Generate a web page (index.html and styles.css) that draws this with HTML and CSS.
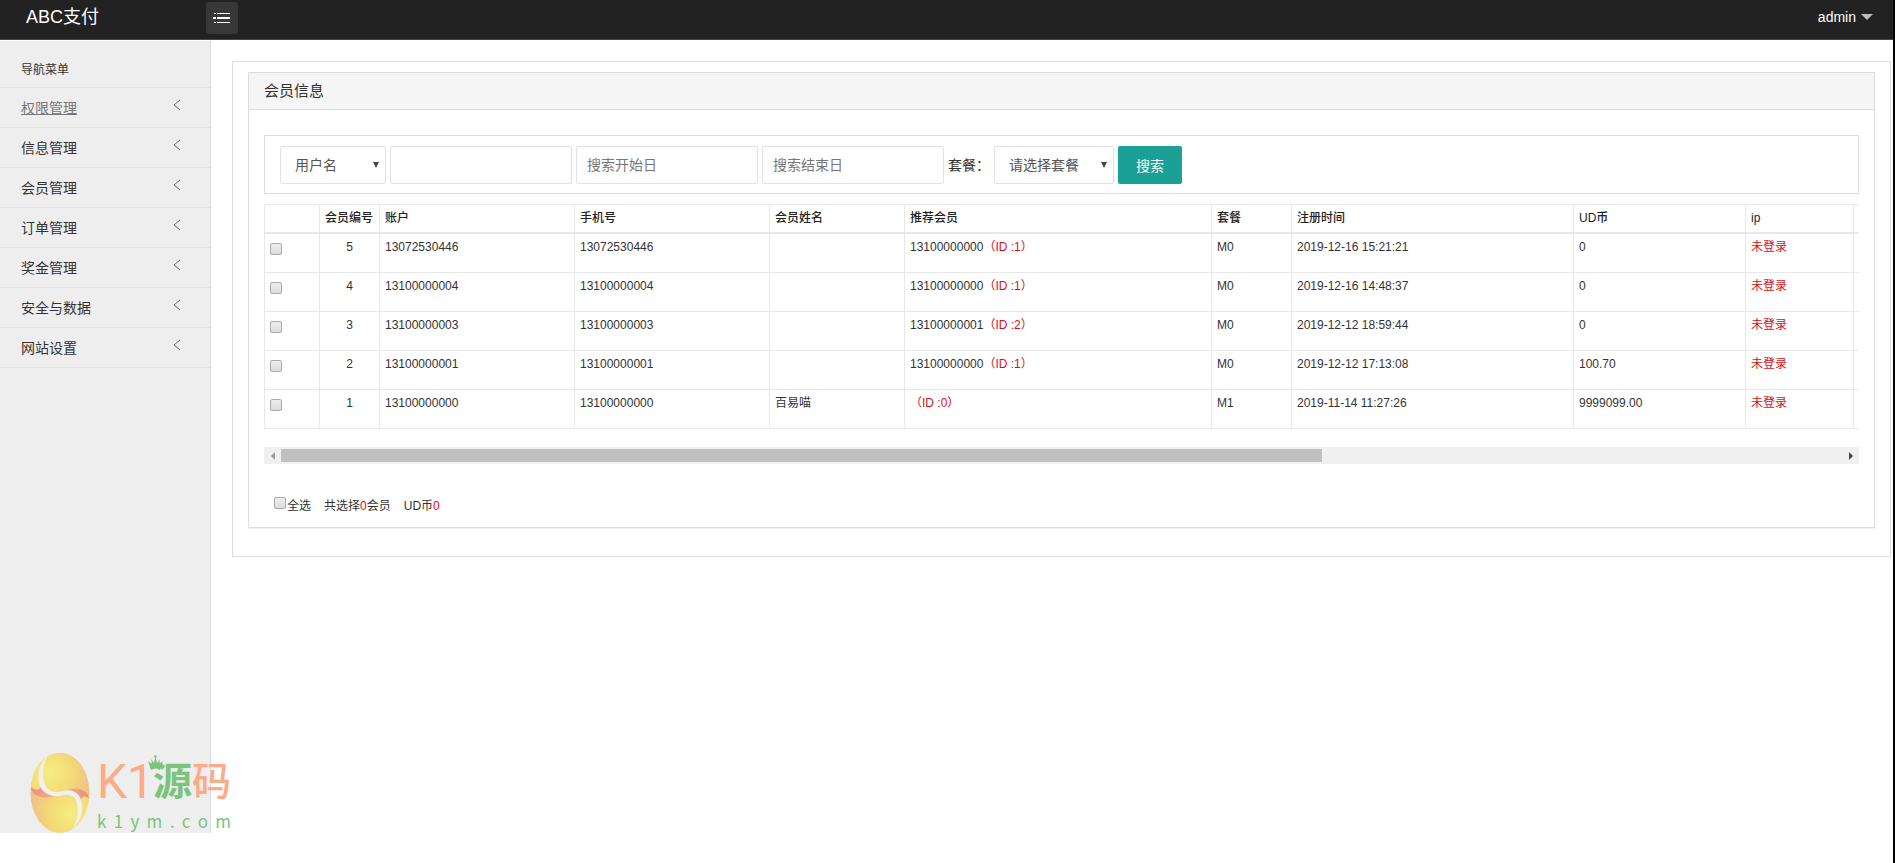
FILE: index.html
```html
<!DOCTYPE html>
<html lang="zh-CN">
<head>
<meta charset="utf-8">
<title>ABC支付</title>
<link rel="stylesheet" href="styles.css">
</head>
<body>
<header class="topbar">
  <a class="brand" href="#">ABC支付</a>
  <button class="menu-toggle" type="button" aria-label="菜单">
    <svg width="18" height="12" viewBox="0 0 18 12" stroke="#fff" stroke-width="1"><path d="M1 1.5h2M4 1.5h13M0 5.5h3M4 5.5h13M0 6.5h3M4 6.5h13M1 10.5h2M4 10.5h13"/></svg>
  </button>
  <button class="user" type="button">admin <span class="caret"></span></button>
</header>
<div class="layout">
  <nav class="sidebar">
    <h2 class="nav-title">导航菜单</h2>
    <a class="nav-item active" href="#">权限管理<svg class="chev" viewBox="0 0 8 12"><path d="M7 1L1 6l6 5"/></svg></a>
    <a class="nav-item" href="#">信息管理<svg class="chev" viewBox="0 0 8 12"><path d="M7 1L1 6l6 5"/></svg></a>
    <a class="nav-item" href="#">会员管理<svg class="chev" viewBox="0 0 8 12"><path d="M7 1L1 6l6 5"/></svg></a>
    <a class="nav-item" href="#">订单管理<svg class="chev" viewBox="0 0 8 12"><path d="M7 1L1 6l6 5"/></svg></a>
    <a class="nav-item" href="#">奖金管理<svg class="chev" viewBox="0 0 8 12"><path d="M7 1L1 6l6 5"/></svg></a>
    <a class="nav-item" href="#">安全与数据<svg class="chev" viewBox="0 0 8 12"><path d="M7 1L1 6l6 5"/></svg></a>
    <a class="nav-item" href="#">网站设置<svg class="chev" viewBox="0 0 8 12"><path d="M7 1L1 6l6 5"/></svg></a>
  </nav>
  <main class="content">
    <section class="panel">
      <h1 class="panel-head">会员信息</h1>
      <div class="panel-body">
        <form class="search">
          <span class="select-wrap field-type"><select aria-label="搜索类型"><option>用户名</option></select></span>
          <input class="text" type="text" aria-label="关键字">
          <input class="text" type="text" placeholder="搜索开始日" aria-label="搜索开始日">
          <input class="text" type="text" placeholder="搜索结束日" aria-label="搜索结束日">
          <label class="plan-label" for="plan">套餐：</label>
          <span class="select-wrap field-plan"><select id="plan"><option>请选择套餐</option></select></span>
          <button class="submit" type="button">搜索</button>
        </form>
        <div class="table-scroll">
          <table class="members">
            <colgroup><col class="c-check"><col class="c-id"><col class="c-acc"><col class="c-acc"><col class="c-name"><col class="c-ref"><col class="c-plan"><col class="c-time"><col class="c-coin"><col class="c-ip"><col></colgroup>
            <thead><tr><th></th><th>会员编号</th><th>账户</th><th>手机号</th><th>会员姓名</th><th>推荐会员</th><th>套餐</th><th>注册时间</th><th>UD币</th><th>ip</th><th></th></tr></thead>
            <tbody>
              <tr><td><input type="checkbox" aria-label="选择5"></td><td class="num">5</td><td>13072530446</td><td>13072530446</td><td></td><td>13100000000<span class="red">（ID :1）</span></td><td>M0</td><td>2019-12-16 15:21:21</td><td>0</td><td class="red">未登录</td><td></td></tr>
              <tr><td><input type="checkbox" aria-label="选择4"></td><td class="num">4</td><td>13100000004</td><td>13100000004</td><td></td><td>13100000000<span class="red">（ID :1）</span></td><td>M0</td><td>2019-12-16 14:48:37</td><td>0</td><td class="red">未登录</td><td></td></tr>
              <tr><td><input type="checkbox" aria-label="选择3"></td><td class="num">3</td><td>13100000003</td><td>13100000003</td><td></td><td>13100000001<span class="red">（ID :2）</span></td><td>M0</td><td>2019-12-12 18:59:44</td><td>0</td><td class="red">未登录</td><td></td></tr>
              <tr><td><input type="checkbox" aria-label="选择2"></td><td class="num">2</td><td>13100000001</td><td>13100000001</td><td></td><td>13100000000<span class="red">（ID :1）</span></td><td>M0</td><td>2019-12-12 17:13:08</td><td>100.70</td><td class="red">未登录</td><td></td></tr>
              <tr><td><input type="checkbox" aria-label="选择1"></td><td class="num">1</td><td>13100000000</td><td>13100000000</td><td>百易喵</td><td><span class="red">（ID :0）</span></td><td>M1</td><td>2019-11-14 11:27:26</td><td>9999099.00</td><td class="red">未登录</td><td></td></tr>
            </tbody>
          </table>
        </div>
        <div class="hbar">
          <span class="arrow left"></span>
          <div class="track"><div class="thumb"></div></div>
          <span class="arrow right"></span>
        </div>
        <div class="summary">
          <label class="all"><input type="checkbox">全选</label>
          <span>共选择<span class="hot">0</span>会员</span>
          <span>UD币<span class="hot">0</span></span>
        </div>
      </div>
    </section>
  </main>
</div>
<div class="watermark">
  <svg class="egg" viewBox="0 0 60 80">
    <defs>
      <radialGradient id="top" gradientUnits="userSpaceOnUse" cx="20" cy="20" r="42"><stop offset="0" stop-color="#f6ee80"/><stop offset=".5" stop-color="#f3dc78"/><stop offset="1" stop-color="#f0c088"/></radialGradient>
      <radialGradient id="bottom" gradientUnits="userSpaceOnUse" cx="41" cy="60" r="42"><stop offset="0" stop-color="#f6ee80"/><stop offset=".5" stop-color="#f4da74"/><stop offset="1" stop-color="#f0bf88"/></radialGradient>
      <linearGradient id="blushL" x1="1" y1="0" x2="0" y2="0"><stop offset="0" stop-color="#f0b488"/><stop offset="1" stop-color="#ea8c84"/></linearGradient>
      <linearGradient id="blushR" x1="0" y1="0" x2="1" y2="0"><stop offset="0" stop-color="#f0b488"/><stop offset="1" stop-color="#ea8c84"/></linearGradient>
    </defs>
    <ellipse cx="30" cy="40" rx="29.5" ry="40" fill="url(#bottom)"/>
    <path fill="url(#top)" d="M1 35C2 14 14 0 30 0C48 0 59 20 59 43C50 37 42 34 34 39C25 44 12 44 1 35Z"/>
    <path fill="url(#blushL)" d="M1 34C5 38 9 37 11 34C14 39 18 42 25 43C15 46 2 44 1 34Z"/>
    <path fill="url(#blushR)" d="M59 46C55 42 53 43 51 46C48 40 43 38 36 37C46 34 58 36 59 46Z"/>
    <path fill="#f0f0f0" d="M18 3C8 10 7 24 10 33C13 41 22 44 30 43C38 41 45 42 47 50C49 60 47 70 41 77C52 68 54 55 51 47C48 38 40 36 33 38C25 41 16 38 14 28C12 18 14 8 18 3Z"/>
  </svg>
  <div class="mark-text">
    <div class="mark-name"><span class="k1">K1</span><span class="yuan">源</span><span class="ma">码</span></div>
    <div class="mark-url"><span>k</span><span>1</span><span>y</span><span>m</span><span>.</span><span>c</span><span>o</span><span>m</span></div>
  </div>
  <svg class="crown" viewBox="0 0 16 16"><path fill="#7bc47b" d="M3 15L1 9 0 6l4 3-1-5 3 4 1-5-1-2 1-1 2 1-1 2 1 5 3-4-1 5 4-3-1 3-2 6Q8 12 3 15Z"/></svg>
</div>
</body>
</html>
```
FILE: styles.css
```css
* { box-sizing: border-box; }
body {
  margin: 0;
  min-height: 100vh;
  display: flex;
  flex-direction: column;
  border-right: 2px solid #000;
  background: #fff;
  color: #333;
  font: 12px/18px "Liberation Sans", "Noto Sans CJK SC", sans-serif;
}
button, input, select { font-family: inherit; }
a { color: inherit; text-decoration: none; }
.topbar {
  display: flex;
  align-items: flex-start;
  height: 40px;
  padding: 2px 20px 0 26px;
  background: #222;
  border-bottom: 1px solid #484848;
}
.brand { width: 180px; font-size: 18px; line-height: 30px; color: #fff; }
.menu-toggle {
  display: flex;
  align-items: center;
  justify-content: center;
  width: 32px;
  height: 32px;
  padding: 0;
  border: 0;
  border-radius: 4px;
  background: #383838;
}
.user {
  display: flex;
  align-items: center;
  gap: 5px;
  margin-left: auto;
  padding: 0;
  border: 0;
  background: none;
  color: #fff;
  font-size: 14px;
  line-height: 30px;
}
.caret { border: 6px solid transparent; border-top-color: #bbb; border-bottom: 0; }
.layout { flex: 1; display: flex; padding-bottom: 30px; }
.sidebar { width: 211px; flex: none; background: #eee; border-right: 1px solid #ddd; border-top: 1px solid #fff; }
.nav-title {
  margin: 0;
  padding: 20px 21px 8px;
  border-bottom: 1px solid #e2e2e2;
  font-size: 12px;
  line-height: 18px;
  font-weight: 400;
}
.nav-item {
  display: flex;
  justify-content: space-between;
  align-items: flex-start;
  height: 40px;
  padding: 10px 29px 0 21px;
  border-bottom: 1px solid #e2e2e2;
  font-size: 14px;
  line-height: 20px;
}
.active { color: #777; text-decoration: underline; }
.chev { width: 8px; height: 12px; margin-top: 1px; fill: none; stroke: #666; stroke-width: 1; }
.content { flex: 1; min-width: 0; align-self: flex-start; margin: 21px 2px 0 21px; padding: 10px 15px 28px; border: 1px solid #ddd; }
.panel { border: 1px solid #ddd; box-shadow: 0 1px 1px rgba(0, 0, 0, .05); }
.panel-head {
  margin: 0;
  padding: 8px 15px;
  background: #f5f5f5;
  border-bottom: 1px solid #ddd;
  font-size: 15px;
  line-height: 20px;
  font-weight: 400;
}
.panel-body { padding: 25px 15px 12px; }
.search {
  display: flex;
  align-items: center;
  gap: 4px;
  height: 59px;
  padding: 0 15px;
  border: 1px solid #ddd;
}
.select-wrap { position: relative; height: 38px; }
.select-wrap::after {
  content: "";
  position: absolute;
  right: 7px;
  top: 16px;
  border: 3px solid transparent;
  border-top: 6px solid #444;
  border-bottom: 0;
  pointer-events: none;
}
.field-type { width: 106px; }
.field-plan { width: 120px; }
select, .text {
  height: 38px;
  border: 1px solid #e2e2e2;
  border-radius: 2px;
  background: #fff;
  color: #555;
  font-size: 14px;
}
select { appearance: none; width: 100%; padding: 0 14px; }
.text { width: 182px; padding: 0 10px; }
.text::placeholder { color: #777; }
.plan-label { width: 42px; font-size: 14px; line-height: 20px; white-space: nowrap; }
.submit { width: 64px; height: 38px; padding: 0; border: 0; border-radius: 2px; background: #1aa094; color: #fff; font-size: 14px; }
.table-scroll { margin-top: 10px; overflow: hidden; }
.members { width: 2388px; table-layout: fixed; border-collapse: collapse; }
.members th, .members td { border: 1px solid #e8e8e8; padding: 4px 5px; vertical-align: top; text-align: left; }
.members th { height: 28px; border-bottom-width: 2px; font-weight: 500; color: #222; }
.members td { height: 39px; }
.members tbody tr:first-child td { height: 40px; }
.members .num { text-align: center; }
.c-check { width: 55px; }
.c-id { width: 60px; }
.c-acc { width: 195px; }
.c-name { width: 135px; }
.c-ref { width: 307px; }
.c-plan { width: 80px; }
.c-time { width: 282px; }
.c-coin { width: 172px; }
.c-ip { width: 108px; }
.red { color: #d4101a; }
.hot { color: #f00; }
input[type="checkbox"] {
  appearance: none;
  display: block;
  width: 12px;
  height: 12px;
  margin: 5px 0 0;
  border: 1px solid #aaa;
  border-radius: 2px;
  background: linear-gradient(#eee, #dcdcdc);
}
.hbar { display: flex; align-items: center; height: 17px; margin-top: 18px; background: #f0f0f0; }
.arrow { flex: none; width: 17px; display: flex; justify-content: center; }
.arrow::before { content: ""; border: 4px solid transparent; }
.left::before { border-right-color: #999; border-left: 0; }
.right::before { border-left-color: #444; border-right: 0; }
.track { flex: 1; }
.thumb { width: 66.7%; height: 13px; background: #c0c0c0; }
.summary { display: flex; gap: 13px; margin-top: 33px; padding-left: 10px; }
.all { display: flex; gap: 1px; }
.all input[type="checkbox"] { margin-top: 0; }
.watermark { position: absolute; left: 30px; bottom: 30px; display: flex; gap: 7px; }
.egg { width: 60px; height: 80px; }
.mark-text { width: 134px; }
.mark-name { display: flex; align-items: center; height: 58px; color: #fbab85; line-height: 58px; }
.k1 { width: 56px; font: 400 48px/58px Roboto, sans-serif; white-space: nowrap; }
.yuan, .ma { font-size: 39px; font-weight: 500; }
.yuan { color: #7bc47b; font-weight: 700; }
.mark-url { display: flex; justify-content: space-between; color: #7bc47b; font: 17px/20px "Noto Sans CJK SC", "Noto Sans", sans-serif; }
.crown { position: absolute; left: 118px; top: 2px; width: 16px; height: 16px; }
```
